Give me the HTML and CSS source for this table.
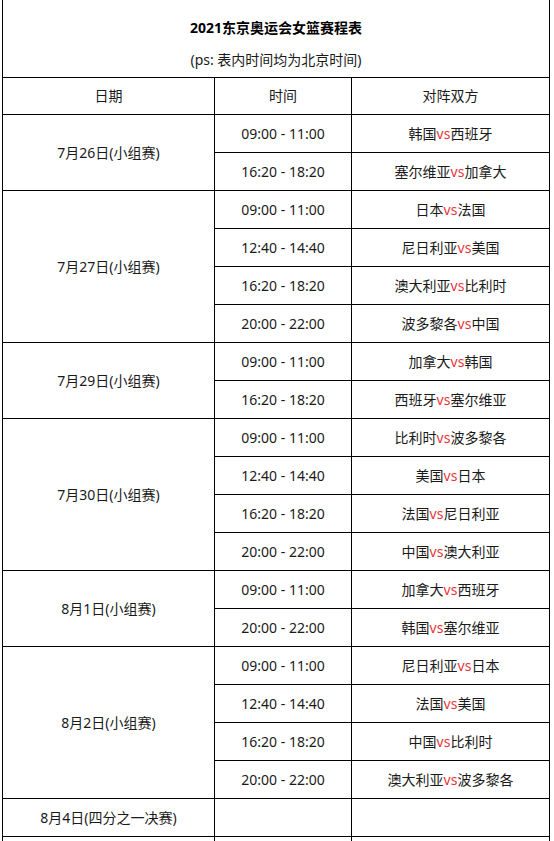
FILE: index.html
```html
<!DOCTYPE html>
<html lang="zh-CN">
<head>
<meta charset="utf-8">
<title>2021东京奥运会女篮赛程表</title>
<link rel="stylesheet" href="styles.css">
</head>
<body>
<table class="schedule">
  <colgroup>
    <col class="c-date">
    <col class="c-time">
    <col class="c-match">
  </colgroup>
  <thead>
    <tr>
      <th colspan="3" class="title-cell">
        <div class="title">2021东京奥运会女篮赛程表</div>
        <div class="subtitle">(ps: 表内时间均为北京时间)</div>
      </th>
    </tr>
    <tr class="head">
      <th>日期</th><th>时间</th><th>对阵双方</th>
    </tr>
  </thead>
  <tbody>
    <tr><td rowspan="2">7月26日(小组赛)</td><td>09:00 - 11:00</td><td>韩国<span class="vs">vs</span>西班牙</td></tr>
    <tr><td>16:20 - 18:20</td><td>塞尔维亚<span class="vs">vs</span>加拿大</td></tr>

    <tr><td rowspan="4">7月27日(小组赛)</td><td>09:00 - 11:00</td><td>日本<span class="vs">vs</span>法国</td></tr>
    <tr><td>12:40 - 14:40</td><td>尼日利亚<span class="vs">vs</span>美国</td></tr>
    <tr><td>16:20 - 18:20</td><td>澳大利亚<span class="vs">vs</span>比利时</td></tr>
    <tr><td>20:00 - 22:00</td><td>波多黎各<span class="vs">vs</span>中国</td></tr>

    <tr><td rowspan="2">7月29日(小组赛)</td><td>09:00 - 11:00</td><td>加拿大<span class="vs">vs</span>韩国</td></tr>
    <tr><td>16:20 - 18:20</td><td>西班牙<span class="vs">vs</span>塞尔维亚</td></tr>

    <tr><td rowspan="4">7月30日(小组赛)</td><td>09:00 - 11:00</td><td>比利时<span class="vs">vs</span>波多黎各</td></tr>
    <tr><td>12:40 - 14:40</td><td>美国<span class="vs">vs</span>日本</td></tr>
    <tr><td>16:20 - 18:20</td><td>法国<span class="vs">vs</span>尼日利亚</td></tr>
    <tr><td>20:00 - 22:00</td><td>中国<span class="vs">vs</span>澳大利亚</td></tr>

    <tr><td rowspan="2">8月1日(小组赛)</td><td>09:00 - 11:00</td><td>加拿大<span class="vs">vs</span>西班牙</td></tr>
    <tr><td>20:00 - 22:00</td><td>韩国<span class="vs">vs</span>塞尔维亚</td></tr>

    <tr><td rowspan="4">8月2日(小组赛)</td><td>09:00 - 11:00</td><td>尼日利亚<span class="vs">vs</span>日本</td></tr>
    <tr><td>12:40 - 14:40</td><td>法国<span class="vs">vs</span>美国</td></tr>
    <tr><td>16:20 - 18:20</td><td>中国<span class="vs">vs</span>比利时</td></tr>
    <tr><td>20:00 - 22:00</td><td>澳大利亚<span class="vs">vs</span>波多黎各</td></tr>

    <tr><td>8月4日(四分之一决赛)</td><td></td><td></td></tr>
    <tr><td>&nbsp;</td><td></td><td></td></tr>
  </tbody>
</table>
</body>
</html>
```

FILE: styles.css
```css
html, body {
  margin: 0;
  padding: 0;
  background: #fff;
}

body {
  font-family: "Noto Sans", "Noto Sans CJK SC", sans-serif;
  font-size: 14px;
  color: #1a1a1a;
  overflow: hidden;
}

.schedule {
  margin-left: 2px;
  width: 547px;
  border-collapse: collapse;
  table-layout: fixed;
}

.c-date { width: 212px; }
.c-time { width: 137px; }
.c-match { width: 198px; }

.schedule th,
.schedule td {
  border: 1px solid #000;
  padding: 0;
  text-align: center;
  vertical-align: middle;
  font-weight: normal;
  height: 37px;
  line-height: 20px;
}

.schedule .head th {
  height: 36px;
}

.schedule .title-cell {
  border-top: 0;
  height: auto;
  padding: 12px 0 1px;
}

.title {
  font-weight: bold;
  color: #000;
  line-height: 32px;
}

.subtitle {
  line-height: 32px;
}

.vs {
  color: #e8343c;
}
```
